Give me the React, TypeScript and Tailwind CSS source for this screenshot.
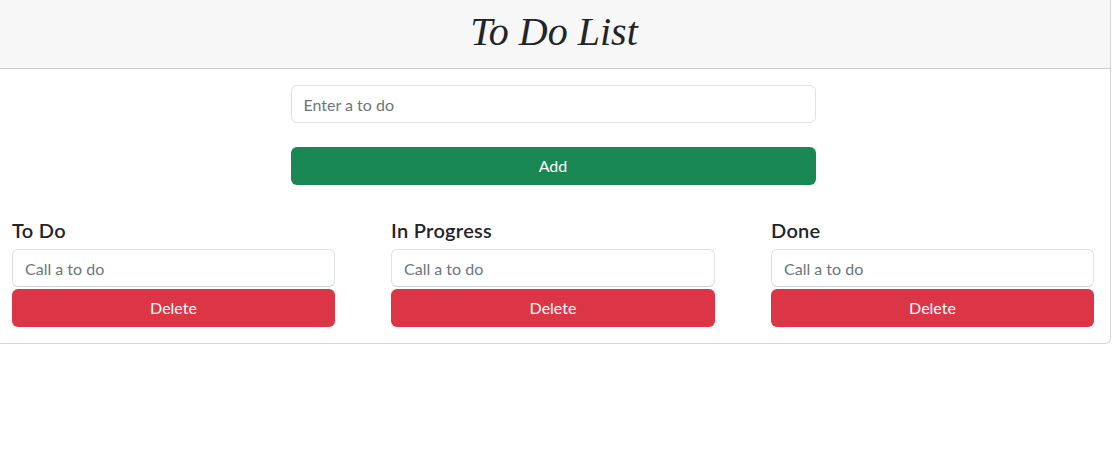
const columns = [
  { title: "To Do", width: "w-[323px]" },
  { title: "In Progress", width: "w-[324px]" },
  { title: "Done", width: "w-[323px]" },
];

export default function App() {
  return (
    <div className="w-[1113px] h-[455px] bg-white font-['Lato',sans-serif] text-[#212529]">
      <div className="w-[1111px] border border-t-0 border-l-0 border-[#d4d4d4] rounded-br-md">
        <div className="h-[69px] bg-[#f7f7f7] border-b border-[#cfcfcf] flex items-center justify-center">
          <h1 className="font-['Liberation_Serif',serif] italic text-[40px] leading-none pb-[4px] pr-[2px]">
            To Do List
          </h1>
        </div>

        <div className="flex flex-col items-center pt-[16px] pr-[4px]">
          <input
            placeholder="Enter a to do"
            className="w-[525px] h-[38px] px-[12px] text-[16px] border border-[#dee2e6] rounded-md placeholder:text-[#6c757d] outline-none"
          />
          <button className="mt-[24px] w-[525px] h-[38px] rounded-md bg-[#198754] text-white text-[16px]">
            Add
          </button>
        </div>

        <div className="flex gap-[56px] pl-[12px] pt-[33px] pb-[16px]">
          {columns.map((col) => (
            <div key={col.title} className={`${col.width} flex flex-col`}>
              <h5 className="text-[20px] font-semibold leading-[24px] mb-[7px] tracking-[0.3px]">{col.title}</h5>
              <input
                placeholder="Call a to do"
                className="h-[38px] px-[12px] text-[16px] border border-[#dee2e6] border-b-[#ced4da] rounded-md placeholder:text-[#6c757d] outline-none"
              />
              <button className="mt-[2px] h-[38px] rounded-md bg-[#dc3545] text-white text-[16px]">
                Delete
              </button>
            </div>
          ))}
        </div>
      </div>
    </div>
  );
}
